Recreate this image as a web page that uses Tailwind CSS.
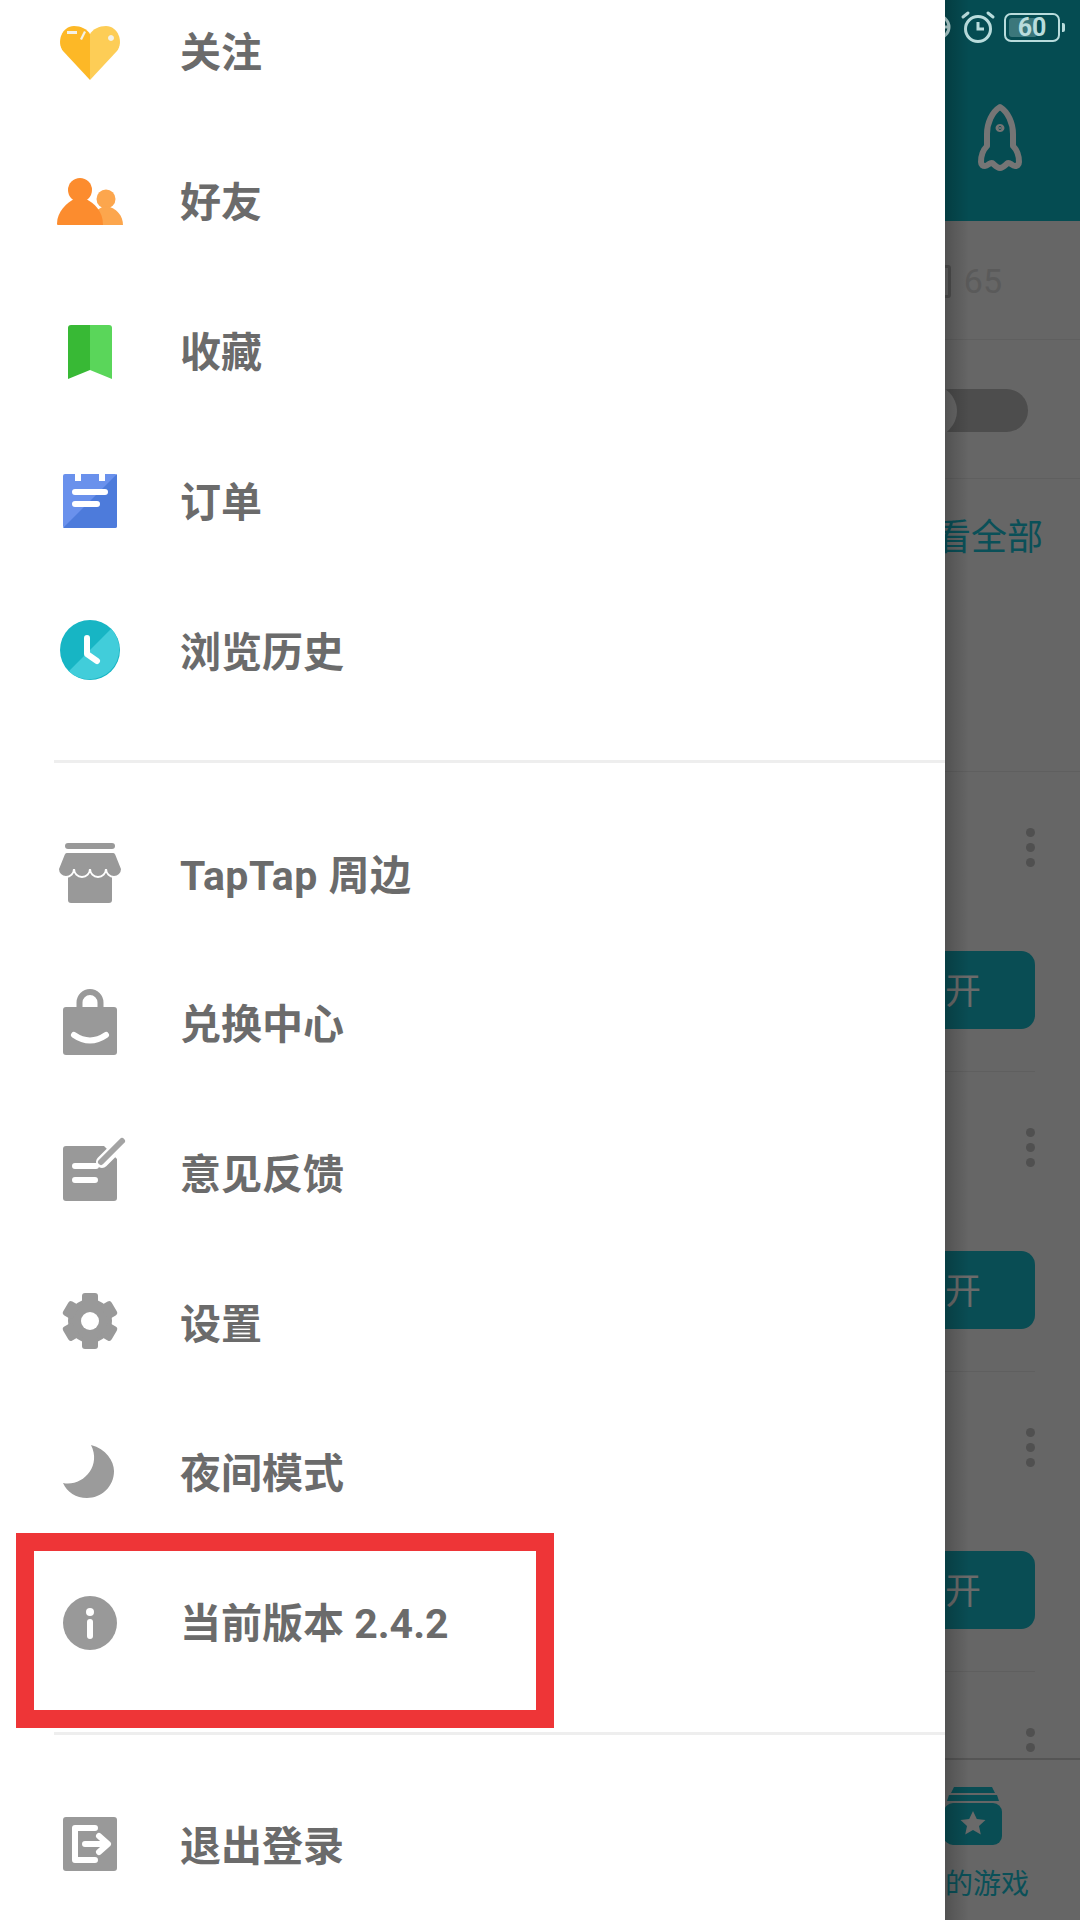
<!DOCTYPE html>
<html lang="zh-CN">

<head>
  <meta charset="UTF-8" />
  <meta name="viewport" content="width=device-width, initial-scale=1" />
  <title>TapTap 菜单</title>
  <script src="https://cdn.jsdelivr.net/npm/@tailwindcss/browser@4"></script>
</head>

<body class="bg-[#666666] font-['Roboto','Noto_Sans_CJK_SC',sans-serif]">
  <div class="relative flex w-[1080px] h-[1920px] overflow-hidden">

    <!-- drawer -->
    <aside class="w-[945px] h-[1920px] shrink-0 bg-white overflow-hidden text-[41px] leading-[48px] font-bold text-[#6b6b6b]">
      <ul class="-mt-[23px]">
        <li class="flex items-center h-[150px] pl-[54px]">
          <svg class="w-[72px] h-[72px] shrink-0 overflow-visible" viewBox="0 0 72 72">
            <path fill="#fdb826" d="M36 18C33 13 27 10 20 10 8 10 2 26 9 35L36 64Z" />
            <path fill="#fdcd56" d="M36 18C39 13 45 10 52 10 64 10 70 26 63 35L36 64Z" />
            <path fill="#f4f1e6" d="M13 15h10v3h-10zM26 23l4-8 2 1-4 8zM57 19a3 3 0 1 0 .01 0z" />
          </svg>
          <span class="ml-[54px] pt-[2px]">关注</span>
        </li>
        <li class="flex items-center h-[150px] pl-[54px]">
          <svg class="w-[72px] h-[72px] shrink-0 overflow-visible" viewBox="0 0 72 72">
            <circle cx="52" cy="33" r="9.5" fill="#fca64d" />
            <path fill="#fca64d" d="M45 59H69C69 50 63 42 52 40 47 41 42 44 40 48Z" />
            <circle cx="26" cy="24" r="12" fill="#fc8c2e" />
            <path fill="#fc8c2e" d="M3 58C3 45 13 37 20 33H32C40 37 49 45 49 59H4Q3 59 3 58Z" />
          </svg>
          <span class="ml-[54px] pt-[2px]">好友</span>
        </li>
        <li class="flex items-center h-[150px] pl-[54px]">
          <svg class="w-[72px] h-[72px] shrink-0 overflow-visible" viewBox="0 0 72 72">
            <path fill="#38b935" d="M36 9H17Q14 9 14 12V63L36 54Z" />
            <path fill="#5ad65a" d="M36 9H55Q58 9 58 12V63L36 54Z" />
          </svg>
          <span class="ml-[54px] pt-[2px]">收藏</span>
        </li>
        <li class="flex items-center h-[150px] pl-[54px]">
          <svg class="w-[72px] h-[72px] shrink-0 overflow-visible" viewBox="0 0 72 72">
            <rect x="9" y="8" width="54" height="54" rx="2" fill="#6a91ec" />
            <path fill="#4d7bdb" d="M9 62 63 8V60Q63 62 61 62Z" />
            <path fill="#fff" d="M21 8h6v7h-6zM45 8h6v7h-6z" />
            <path stroke="#fff" stroke-width="6" stroke-linecap="round" d="M21 26H51M21 38H43" />
          </svg>
          <span class="ml-[54px] pt-[2px]">订单</span>
        </li>
        <li class="flex items-center h-[150px] pl-[54px]">
          <svg class="w-[72px] h-[72px] shrink-0 overflow-visible" viewBox="0 0 72 72">
            <circle cx="36" cy="34" r="30" fill="#17b5c4" />
            <path fill="#41cdda" d="M57.2 12.8A30 30 0 0 1 14.8 55.2Z" />
            <path fill="none" stroke="#fff" stroke-width="6" stroke-linecap="round" stroke-linejoin="round" d="M33 22V38L43 45" />
          </svg>
          <span class="ml-[54px] pt-[2px]">浏览历史</span>
        </li>
      </ul>

      <div class="ml-[54px] mt-[33px] h-[3px] bg-[#eeeeee]"></div>

      <ul class="mt-[37px]">
        <li class="flex items-center h-[149.6px] pl-[54px]">
          <svg class="w-[72px] h-[72px] shrink-0 overflow-visible" viewBox="0 0 72 72">
            <rect x="11" y="4" width="50" height="6" rx="3" fill="#999999" />
            <rect x="14" y="30" width="44" height="34" rx="3" fill="#999999" />
            <path fill="#999999" stroke="#fff" stroke-width="2" d="M13 13H59Q61 13 62 15L68 30A8 8 0 0 1 52 30A8 8 0 0 1 36 30A8 8 0 0 1 20 30A8 8 0 0 1 4 30L10 15Q11 13 13 13Z" />
          </svg>
          <span class="ml-[54px] pt-[2px] tracking-[0.5px]">TapTap 周边</span>
        </li>
        <li class="flex items-center h-[149.6px] pl-[54px]">
          <svg class="w-[72px] h-[72px] shrink-0 overflow-visible" viewBox="0 0 72 72">
            <path fill="none" stroke="#999999" stroke-width="6" d="M25.5 22V14.5A10.5 10.5 0 0 1 46.5 14.5V22" />
            <rect x="9" y="19" width="54" height="48" rx="3" fill="#999999" />
            <path fill="none" stroke="#fff" stroke-width="6" stroke-linecap="round" d="M20 47Q36 58 52 47" />
          </svg>
          <span class="ml-[54px] pt-[2px]">兑换中心</span>
        </li>
        <li class="flex items-center h-[149.6px] pl-[54px]">
          <svg class="w-[72px] h-[72px] shrink-0 overflow-visible" viewBox="0 0 72 72">
            <path fill="#999999" d="M12 8H50L63 21V60Q63 63 60 63H12Q9 63 9 60V11Q9 8 12 8Z" />
            <path stroke="#fff" stroke-width="12" stroke-linecap="round" d="M48 24 70 2" />
            <path stroke="#a3a3a3" stroke-width="6" stroke-linecap="round" d="M47 24 68 3" />
            <path stroke="#fff" stroke-width="6" stroke-linecap="round" d="M21 28H42M21 42H41" />
          </svg>
          <span class="ml-[54px] pt-[2px]">意见反馈</span>
        </li>
        <li class="flex items-center h-[149.6px] pl-[54px]">
          <svg class="w-[72px] h-[72px] shrink-0 overflow-visible" viewBox="0 0 72 72">
            <g fill="#999999">
              <circle cx="36" cy="33" r="22" />
              <rect x="28" y="5" width="16" height="12" rx="3" />
              <rect x="28" y="5" width="16" height="12" rx="3" transform="rotate(60 36 33)" />
              <rect x="28" y="5" width="16" height="12" rx="3" transform="rotate(120 36 33)" />
              <rect x="28" y="5" width="16" height="12" rx="3" transform="rotate(180 36 33)" />
              <rect x="28" y="5" width="16" height="12" rx="3" transform="rotate(240 36 33)" />
              <rect x="28" y="5" width="16" height="12" rx="3" transform="rotate(300 36 33)" />
            </g>
            <circle cx="36" cy="33" r="9" fill="#fff" />
          </svg>
          <span class="ml-[54px] pt-[2px]">设置</span>
        </li>
        <li class="flex items-center h-[149.6px] pl-[54px]">
          <svg class="w-[72px] h-[72px] shrink-0 overflow-visible" viewBox="0 0 72 72">
            <path fill="#9b9b9b" d="M37 8C52 12 60 24 60 34 60 50 47 61 33 61 22 61 13 55 9 46 28 50 48 30 37 8Z" />
          </svg>
          <span class="ml-[54px] pt-[2px]">夜间模式</span>
        </li>
        <li class="flex items-center h-[149.6px] pl-[54px]">
          <svg class="w-[72px] h-[72px] shrink-0 overflow-visible" viewBox="0 0 72 72">
            <circle cx="36" cy="36" r="27" fill="#999999" />
            <circle cx="36" cy="25" r="4" fill="#fff" />
            <path stroke="#fff" stroke-width="6" stroke-linecap="round" d="M36 35V49" />
          </svg>
          <span class="ml-[54px] pt-[2px]">当前版本 2.4.2</span>
        </li>
      </ul>

      <div class="ml-[54px] mt-[34px] h-[3px] bg-[#eeeeee]"></div>

      <div class="flex items-center h-[150px] mt-[36px] pl-[54px]">
        <svg class="w-[72px] h-[72px] shrink-0 overflow-visible" viewBox="0 0 72 72">
          <rect x="9" y="7" width="54" height="54" rx="3" fill="#999999" />
          <path fill="none" stroke="#fff" stroke-width="6" stroke-linecap="round" stroke-linejoin="round" d="M41 18H21V50H41" />
          <path fill="none" stroke="#fff" stroke-width="6" stroke-linecap="round" stroke-linejoin="round" d="M31 34H53M45 26 54 34 45 42" />
        </svg>
        <span class="ml-[54px] pt-[2px]">退出登录</span>
      </div>
    </aside>

    <!-- page behind the drawer, dimmed -->
    <main class="relative flex flex-col w-[135px] h-[1920px] overflow-hidden bg-[#666666]">
      <header class="h-[221px] shrink-0 bg-[#054c52]">
        <div class="flex justify-end items-center h-[54px] gap-[8px] pr-[15px] text-[#b9dcdc]">
          <svg class="w-[28px] h-[28px] shrink-0" viewBox="0 0 28 28" fill="none" stroke="#b9dcdc" stroke-width="3">
            <circle cx="14" cy="14" r="11" />
            <path d="M3 14H25" />
          </svg>
          <svg class="w-[36px] h-[36px] shrink-0" viewBox="0 0 36 36" fill="none" stroke="#b9dcdc" stroke-width="3">
            <circle cx="18" cy="20" r="12.5" />
            <path d="M18 13V20H24" />
            <path stroke-linecap="round" d="M3 8 8 4M33 8 28 4" />
          </svg>
          <div class="flex items-center gap-[2px] shrink-0">
            <div class="relative flex items-center justify-center w-[56px] h-[29px] border-2 border-[#b9dcdc] rounded-[7px]">
              <div class="absolute left-[3px] top-[3px] bottom-[3px] w-[28px] rounded-[3px] bg-[#b9dcdc]/30"></div>
              <span class="relative text-[25px] leading-[25px] font-bold">60</span>
            </div>
            <div class="w-[3px] h-[9px] bg-[#b9dcdc] rounded-r-[2px]"></div>
          </div>
        </div>
        <div class="flex justify-end pt-[49px] pr-[58px]">
          <svg class="w-[44px] h-[70px]" viewBox="0 0 44 70" fill="none" stroke="#757575" stroke-width="6" stroke-linejoin="round">
            <path d="M22 4C14 9 9 20 9 31V43C6 46 3 51 3 59 3 62 5 63 7 63 10 63 12 59 14 60 16 61 18 65 22 65 26 65 28 61 30 60 32 59 34 63 37 63 39 63 41 62 41 59 41 51 38 46 35 43V31C35 20 30 9 22 4Z" />
            <ellipse cx="22" cy="25" rx="1.5" ry="1" fill="#757575" />
          </svg>
        </div>
      </header>

      <div class="flex justify-end items-center gap-[13px] h-[119px] shrink-0 pr-[78px] pt-[2px] border-b border-[#5f5f5f]">
        <div class="w-[30px] h-[33px] shrink-0 border-[3px] border-[#4f4f4f] rounded-[3px]"></div>
        <span class="text-[34px] leading-[36px] text-[#5a5a5a]">65</span>
      </div>

      <div class="flex justify-end items-center h-[139px] shrink-0 pr-[52px] pt-[2px] border-b border-[#5f5f5f]">
        <div class="relative w-[100px] h-[43px] shrink-0 rounded-full bg-[#4d4d4d]">
          <div class="absolute -left-[23px] -top-[4px] w-[52px] h-[52px] rounded-full bg-[#696969]"></div>
        </div>
      </div>

      <div class="flex justify-end h-[293px] shrink-0 pt-[41px] pr-[37px] border-b border-[#5f5f5f]">
        <span class="shrink-0 text-[36px] leading-[36px] text-[#0a5058]">查看全部</span>
      </div>

      <ul class="flex-1 min-h-0 overflow-hidden mr-[45px]">
        <li class="flex flex-col items-end h-[300px] pt-[56px] border-b border-[#5f5f5f]">
          <div class="flex flex-col gap-[6px]">
            <div class="w-[9px] h-[9px] rounded-full bg-[#505050]"></div>
            <div class="w-[9px] h-[9px] rounded-full bg-[#505050]"></div>
            <div class="w-[9px] h-[9px] rounded-full bg-[#505050]"></div>
          </div>
          <div class="flex justify-center items-center shrink-0 w-[180px] h-[78px] mt-[84px] pt-[4px] rounded-[14px] bg-[#094d54] text-[36px] text-[#6b6b6b]">打开</div>
        </li>
        <li class="flex flex-col items-end h-[300px] pt-[56px] border-b border-[#5f5f5f]">
          <div class="flex flex-col gap-[6px]">
            <div class="w-[9px] h-[9px] rounded-full bg-[#505050]"></div>
            <div class="w-[9px] h-[9px] rounded-full bg-[#505050]"></div>
            <div class="w-[9px] h-[9px] rounded-full bg-[#505050]"></div>
          </div>
          <div class="flex justify-center items-center shrink-0 w-[180px] h-[78px] mt-[84px] pt-[4px] rounded-[14px] bg-[#094d54] text-[36px] text-[#6b6b6b]">打开</div>
        </li>
        <li class="flex flex-col items-end h-[300px] pt-[56px] border-b border-[#5f5f5f]">
          <div class="flex flex-col gap-[6px]">
            <div class="w-[9px] h-[9px] rounded-full bg-[#505050]"></div>
            <div class="w-[9px] h-[9px] rounded-full bg-[#505050]"></div>
            <div class="w-[9px] h-[9px] rounded-full bg-[#505050]"></div>
          </div>
          <div class="flex justify-center items-center shrink-0 w-[180px] h-[78px] mt-[84px] pt-[4px] rounded-[14px] bg-[#094d54] text-[36px] text-[#6b6b6b]">打开</div>
        </li>
        <li class="flex flex-col items-end h-[300px] pt-[56px]">
          <div class="flex flex-col gap-[6px]">
            <div class="w-[9px] h-[9px] rounded-full bg-[#505050]"></div>
            <div class="w-[9px] h-[9px] rounded-full bg-[#505050]"></div>
            <div class="w-[9px] h-[9px] rounded-full bg-[#505050]"></div>
          </div>
        </li>
      </ul>

      <nav class="flex justify-end h-[162px] shrink-0 pt-[27px] pr-[51px] border-t-2 border-[#555555] bg-[#666666]">
        <div class="flex flex-col items-center shrink-0 w-[112px]">
          <svg class="w-[58px] h-[60px]" viewBox="0 0 58 60">
            <path fill="#094d54" d="M10 0H48L51 6H7ZM5 8H53L55 14H3Z" />
            <rect x="0" y="16" width="58" height="42" rx="9" fill="#094d54" />
            <path fill="#6a6a6a" d="M29 24 32.8 32 41.5 33 35 39 36.8 47.5 29 43 21.2 47.5 23 39 16.5 33 25.2 32Z" />
          </svg>
          <span class="mt-[22px] text-[28px] leading-[32px] text-[#0a5058] whitespace-nowrap">我的游戏</span>
        </div>
      </nav>

      <!-- drawer's cast shadow -->
      <div class="absolute left-0 top-0 bottom-0 w-[24px] bg-gradient-to-r from-black/20 to-transparent"></div>
    </main>

    <!-- red highlight drawn over the screenshot -->
    <div class="absolute left-[16px] top-[1533px] w-[538px] h-[195px] border-[18px] border-[#ee3537]"></div>
  </div>
</body>

</html>
